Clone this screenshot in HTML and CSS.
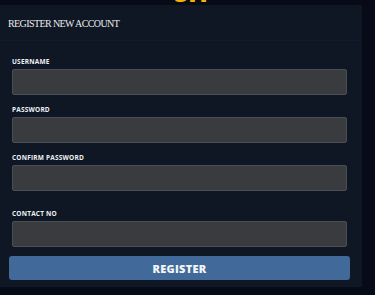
FILE: index.html
```html
<!DOCTYPE html>
<html lang="en">
<head>
<meta charset="UTF-8">
<meta name="viewport" content="width=device-width, initial-scale=1.0">
<title>Register</title>
<link rel="stylesheet" href="styles.css">
</head>
<body>

<div class="brand"><span>SIT</span></div>

<div class="panel">
    <div class="panel-head">REGISTER NEW ACCOUNT</div>

    <form class="panel-body">
        <label for="username">Username</label>
        <input type="text" id="username">

        <label for="password">Password</label>
        <input type="password" id="password">

        <label for="confirm">Confirm Password</label>
        <input type="password" id="confirm">

        <label for="contact" class="spaced">Contact No</label>
        <input type="text" id="contact">

        <button type="button">Register</button>
    </form>
</div>

</body>
</html>
```

FILE: styles.css
```css
body {
    margin: 0;
    background-color: #070b17;
    font-family: "Open Sans", Arial, sans-serif;
    height: 295px;
    overflow: hidden;
}

.brand {
    height: 5px;
    overflow: hidden;
    text-align: center;
    padding-left: 10px;
}

.brand span {
    display: block;
    margin-top: -21px;
    font-size: 24px;
    line-height: 28px;
    font-weight: 800;
    color: #f5b400;
}

.panel {
    width: 362px;
    height: 282px;
    background-color: #0f1725;
}

.panel-head {
    font-family: "Liberation Serif", "DejaVu Serif", serif;
    font-size: 10px;
    letter-spacing: -0.6px;
    color: #ececec;
    padding: 13px 8px 0;
    height: 22px;
    border-bottom: 1px solid #121b29;
}

.panel-body {
    display: flex;
    flex-direction: column;
    padding: 16px 15px 0 12px;
}

label {
    font-size: 6.5px;
    line-height: 9px;
    font-weight: 700;
    text-transform: uppercase;
    color: #eef0f3;
    letter-spacing: 0.2px;
    margin-bottom: 3px;
}

label.spaced {
    margin-top: 8px;
}

input {
    height: 26px;
    box-sizing: border-box;
    background-color: #393b3f;
    border: 1px solid #4b4e54;
    border-radius: 2px;
    margin: 0 0 10px;
}

button {
    margin: -1px -3px 0 -3px;
    height: 24px;
    background-color: #41699a;
    color: #f3f5f8;
    border: none;
    border-radius: 3px;
    font-family: "Open Sans", Arial, sans-serif;
    font-weight: 800;
    font-size: 11px;
    text-transform: uppercase;
    letter-spacing: 0.3px;
}
```
